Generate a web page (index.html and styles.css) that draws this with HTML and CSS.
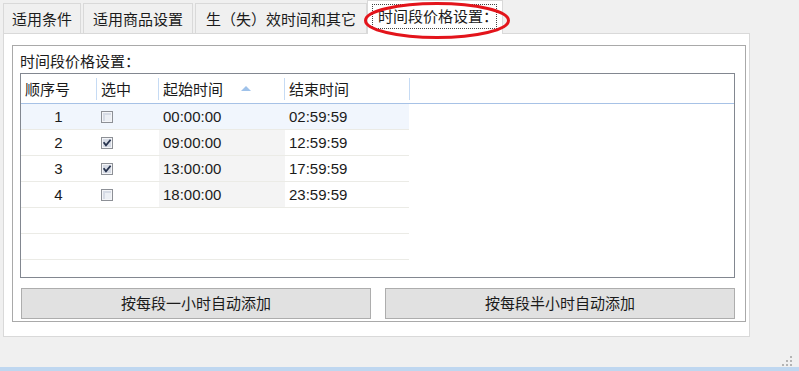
FILE: index.html
```html
<!DOCTYPE html>
<html lang="zh-CN">
<head>
<meta charset="utf-8">
<title>时间段价格设置</title>
<link rel="stylesheet" href="styles.css">
</head>
<body>
<div class="window">
  <div class="tabs">
    <div class="tab t1">适用条件</div>
    <div class="tab t2">适用商品设置</div>
    <div class="tab t3">生（失）效时间和其它</div>
    <div class="tab active">
      <span class="focus">时间段价格设置：</span>
      <svg class="ring" width="150" height="40" viewBox="0 0 150 40"><ellipse cx="73" cy="18.5" rx="71.5" ry="17" fill="none" stroke="#e3141b" stroke-width="3"/></svg>
    </div>
  </div>
  <div class="panel">
    <div class="group">
      <div class="glabel">时间段价格设置：</div>
      <div class="grid">
        <div class="ghead">
          <div class="hc c1"><span class="cjk">顺序号</span></div><i class="sep"></i>
          <div class="hc c2"><span class="cjk">选中</span></div><i class="sep"></i>
          <div class="hc c3"><span class="cjk">起始时间</span><span class="arrow"></span></div><i class="sep"></i>
          <div class="hc c4"><span class="cjk">结束时间</span></div><i class="sep"></i>
        </div>
        <div class="row r1">
          <div class="d1">1</div>
          <div class="d2"><svg class="cb" width="12" height="12" viewBox="0 0 12 12"><rect x="0.5" y="0.5" width="11" height="11" fill="#f4f5f8" stroke="#8d9096"/><rect x="2" y="2" width="8" height="8" fill="#d6dbe5"/><rect x="4" y="4" width="6" height="6" fill="#eceff4"/></svg></div>
          <div class="d3">00:00:00</div>
          <div class="d4">02:59:59</div>
        </div>
        <div class="row sorted">
          <div class="d1">2</div>
          <div class="d2"><svg class="cb" width="12" height="12" viewBox="0 0 12 12"><rect x="0.5" y="0.5" width="11" height="11" fill="#f4f5f8" stroke="#8d9096"/><rect x="2" y="2" width="8" height="8" fill="#d6dbe5"/><path d="M2.6 5.2 L5 8.4 L9.6 2.8" fill="none" stroke="#26324d" stroke-width="1.8"/></svg></div>
          <div class="d3">09:00:00</div>
          <div class="d4">12:59:59</div>
        </div>
        <div class="row sorted">
          <div class="d1">3</div>
          <div class="d2"><svg class="cb" width="12" height="12" viewBox="0 0 12 12"><rect x="0.5" y="0.5" width="11" height="11" fill="#f4f5f8" stroke="#8d9096"/><rect x="2" y="2" width="8" height="8" fill="#d6dbe5"/><path d="M2.6 5.2 L5 8.4 L9.6 2.8" fill="none" stroke="#26324d" stroke-width="1.8"/></svg></div>
          <div class="d3">13:00:00</div>
          <div class="d4">17:59:59</div>
        </div>
        <div class="row sorted">
          <div class="d1">4</div>
          <div class="d2"><svg class="cb" width="12" height="12" viewBox="0 0 12 12"><rect x="0.5" y="0.5" width="11" height="11" fill="#f4f5f8" stroke="#8d9096"/><rect x="2" y="2" width="8" height="8" fill="#d6dbe5"/><rect x="4" y="4" width="6" height="6" fill="#eceff4"/></svg></div>
          <div class="d3">18:00:00</div>
          <div class="d4">23:59:59</div>
        </div>
        <div class="row"></div>
        <div class="row"></div>
        <div class="row"></div>
      </div>
      <div class="btns">
        <button class="btn">按每段一小时自动添加</button>
        <button class="btn">按每段半小时自动添加</button>
      </div>
    </div>
  </div>
  <div class="footer">
    <svg class="grip" width="12" height="12" viewBox="0 0 12 12">
      <rect x="8" y="1" width="2" height="2" fill="#b4b4b4"/>
      <rect x="4" y="5" width="2" height="2" fill="#b4b4b4"/>
      <rect x="8" y="5" width="2" height="2" fill="#b4b4b4"/>
      <rect x="0" y="9" width="2" height="2" fill="#b4b4b4"/>
      <rect x="4" y="9" width="2" height="2" fill="#b4b4b4"/>
      <rect x="8" y="9" width="2" height="2" fill="#b4b4b4"/>
    </svg>
  </div>
  <div class="strip"></div>
</div>
</body>
</html>
```
FILE: styles.css
```css
* { box-sizing: border-box; }
body {
  margin: 0;
  background: #f0f0f0;
  font-family: "Liberation Sans", "Noto Sans CJK SC", sans-serif;
  font-size: 15px;
  color: #1b1b1b;
}
.cjk {
  font-family: "Noto Sans CJK SC", sans-serif;
  color: #1b1b1b;
}
.window {
  width: 799px;
  height: 371px;
  display: flex;
  flex-direction: column;
  overflow: hidden;
}
.tabs {
  height: 34px;
  flex: none;
  display: flex;
  align-items: flex-end;
  padding-left: 3px;
}
.tab {
  height: 31px;
  border: 1px solid #d9d9d9;
  border-bottom: none;
  background: #f0f0f0;
  margin-right: 2px;
  display: flex;
  align-items: center;
  justify-content: center;
  line-height: 20px;
  padding-top: 1px;
  white-space: nowrap;
}
.t1 { width: 78px; }
.t2 { width: 110px; }
.t3 { width: 172px; margin-right: 0; }
.active {
  height: 34px;
  width: 136px;
  background: #fff;
  position: relative;
  z-index: 1;
  align-items: flex-start;
  justify-content: flex-start;
  padding: 3px 5px 0 4px;
}
.focus {
  display: flex;
  align-items: center;
  width: 100%;
  height: 25px;
  border: 1px dotted #444;
  padding-left: 5px;
}
.ring {
  position: absolute;
  left: -4px;
  top: 1px;
  pointer-events: none;
}
.panel {
  margin: -1px 0 0 3px;
  width: 747px;
  height: 304px;
  flex: none;
  background: #fff;
  border: 1px solid #d9d9d9;
  position: relative;
  z-index: 0;
  padding: 11px 0 0 8px;
}
.group {
  width: 734px;
  height: 277px;
  border: 1px solid #a9a9a9;
  padding: 6px 10px 2px 7px;
  display: flex;
  flex-direction: column;
}
.glabel {
  height: 21px;
  line-height: 19px;
  flex: none;
}
.grid {
  height: 205px;
  flex: none;
  border: 1px solid #828790;
  background: #fff;
  overflow: hidden;
}
.ghead {
  height: 30px;
  border-bottom: 1px solid #a7c2e6;
  display: flex;
  align-items: center;
}
.hc {
  height: 100%;
  display: flex;
  align-items: center;
  padding-left: 4px;
  white-space: nowrap;
}
.c1 { width: 75px; }
.c2 { width: 61px; }
.c3 { width: 125px; }
.c4 { width: 124px; }
.sep {
  width: 1px;
  height: 22px;
  background: #c6dbf4;
}
.arrow {
  width: 0;
  height: 0;
  margin-left: 18px;
  border-left: 5px solid transparent;
  border-right: 5px solid transparent;
  border-bottom: 5px solid #9fc2ea;
}
.row {
  display: flex;
  width: 388px;
  height: 26px;
  border-bottom: 1px solid #ebebe6;
}
.row > div {
  display: flex;
  align-items: center;
  height: 100%;
}
.r1 { background: #f1f6fd; }
.d1 { width: 76px; justify-content: center; padding-right: 1px; }
.d2 { width: 62px; padding-left: 4px; }
.d3 { width: 126px; padding-left: 4px; }
.d4 { width: 124px; padding-left: 4px; }
.sorted .d3 { background: #f4f4f4; }
.cb { display: block; }
.btns {
  display: flex;
  gap: 14px;
  margin-top: 10px;
  padding-left: 1px;
  flex: none;
}
.btn {
  flex: 1;
  height: 31px;
  background: #e1e1e1;
  border: 1px solid #adadad;
  font: inherit;
  color: #1b1b1b;
  padding: 0;
  line-height: 20px;
}
.footer {
  height: 30px;
  flex: none;
  display: flex;
  justify-content: flex-end;
  align-items: flex-end;
  padding-right: 5px;
}
.grip { display: block; }
.strip {
  height: 4px;
  flex: none;
  background: #bfd7f0;
}
```
